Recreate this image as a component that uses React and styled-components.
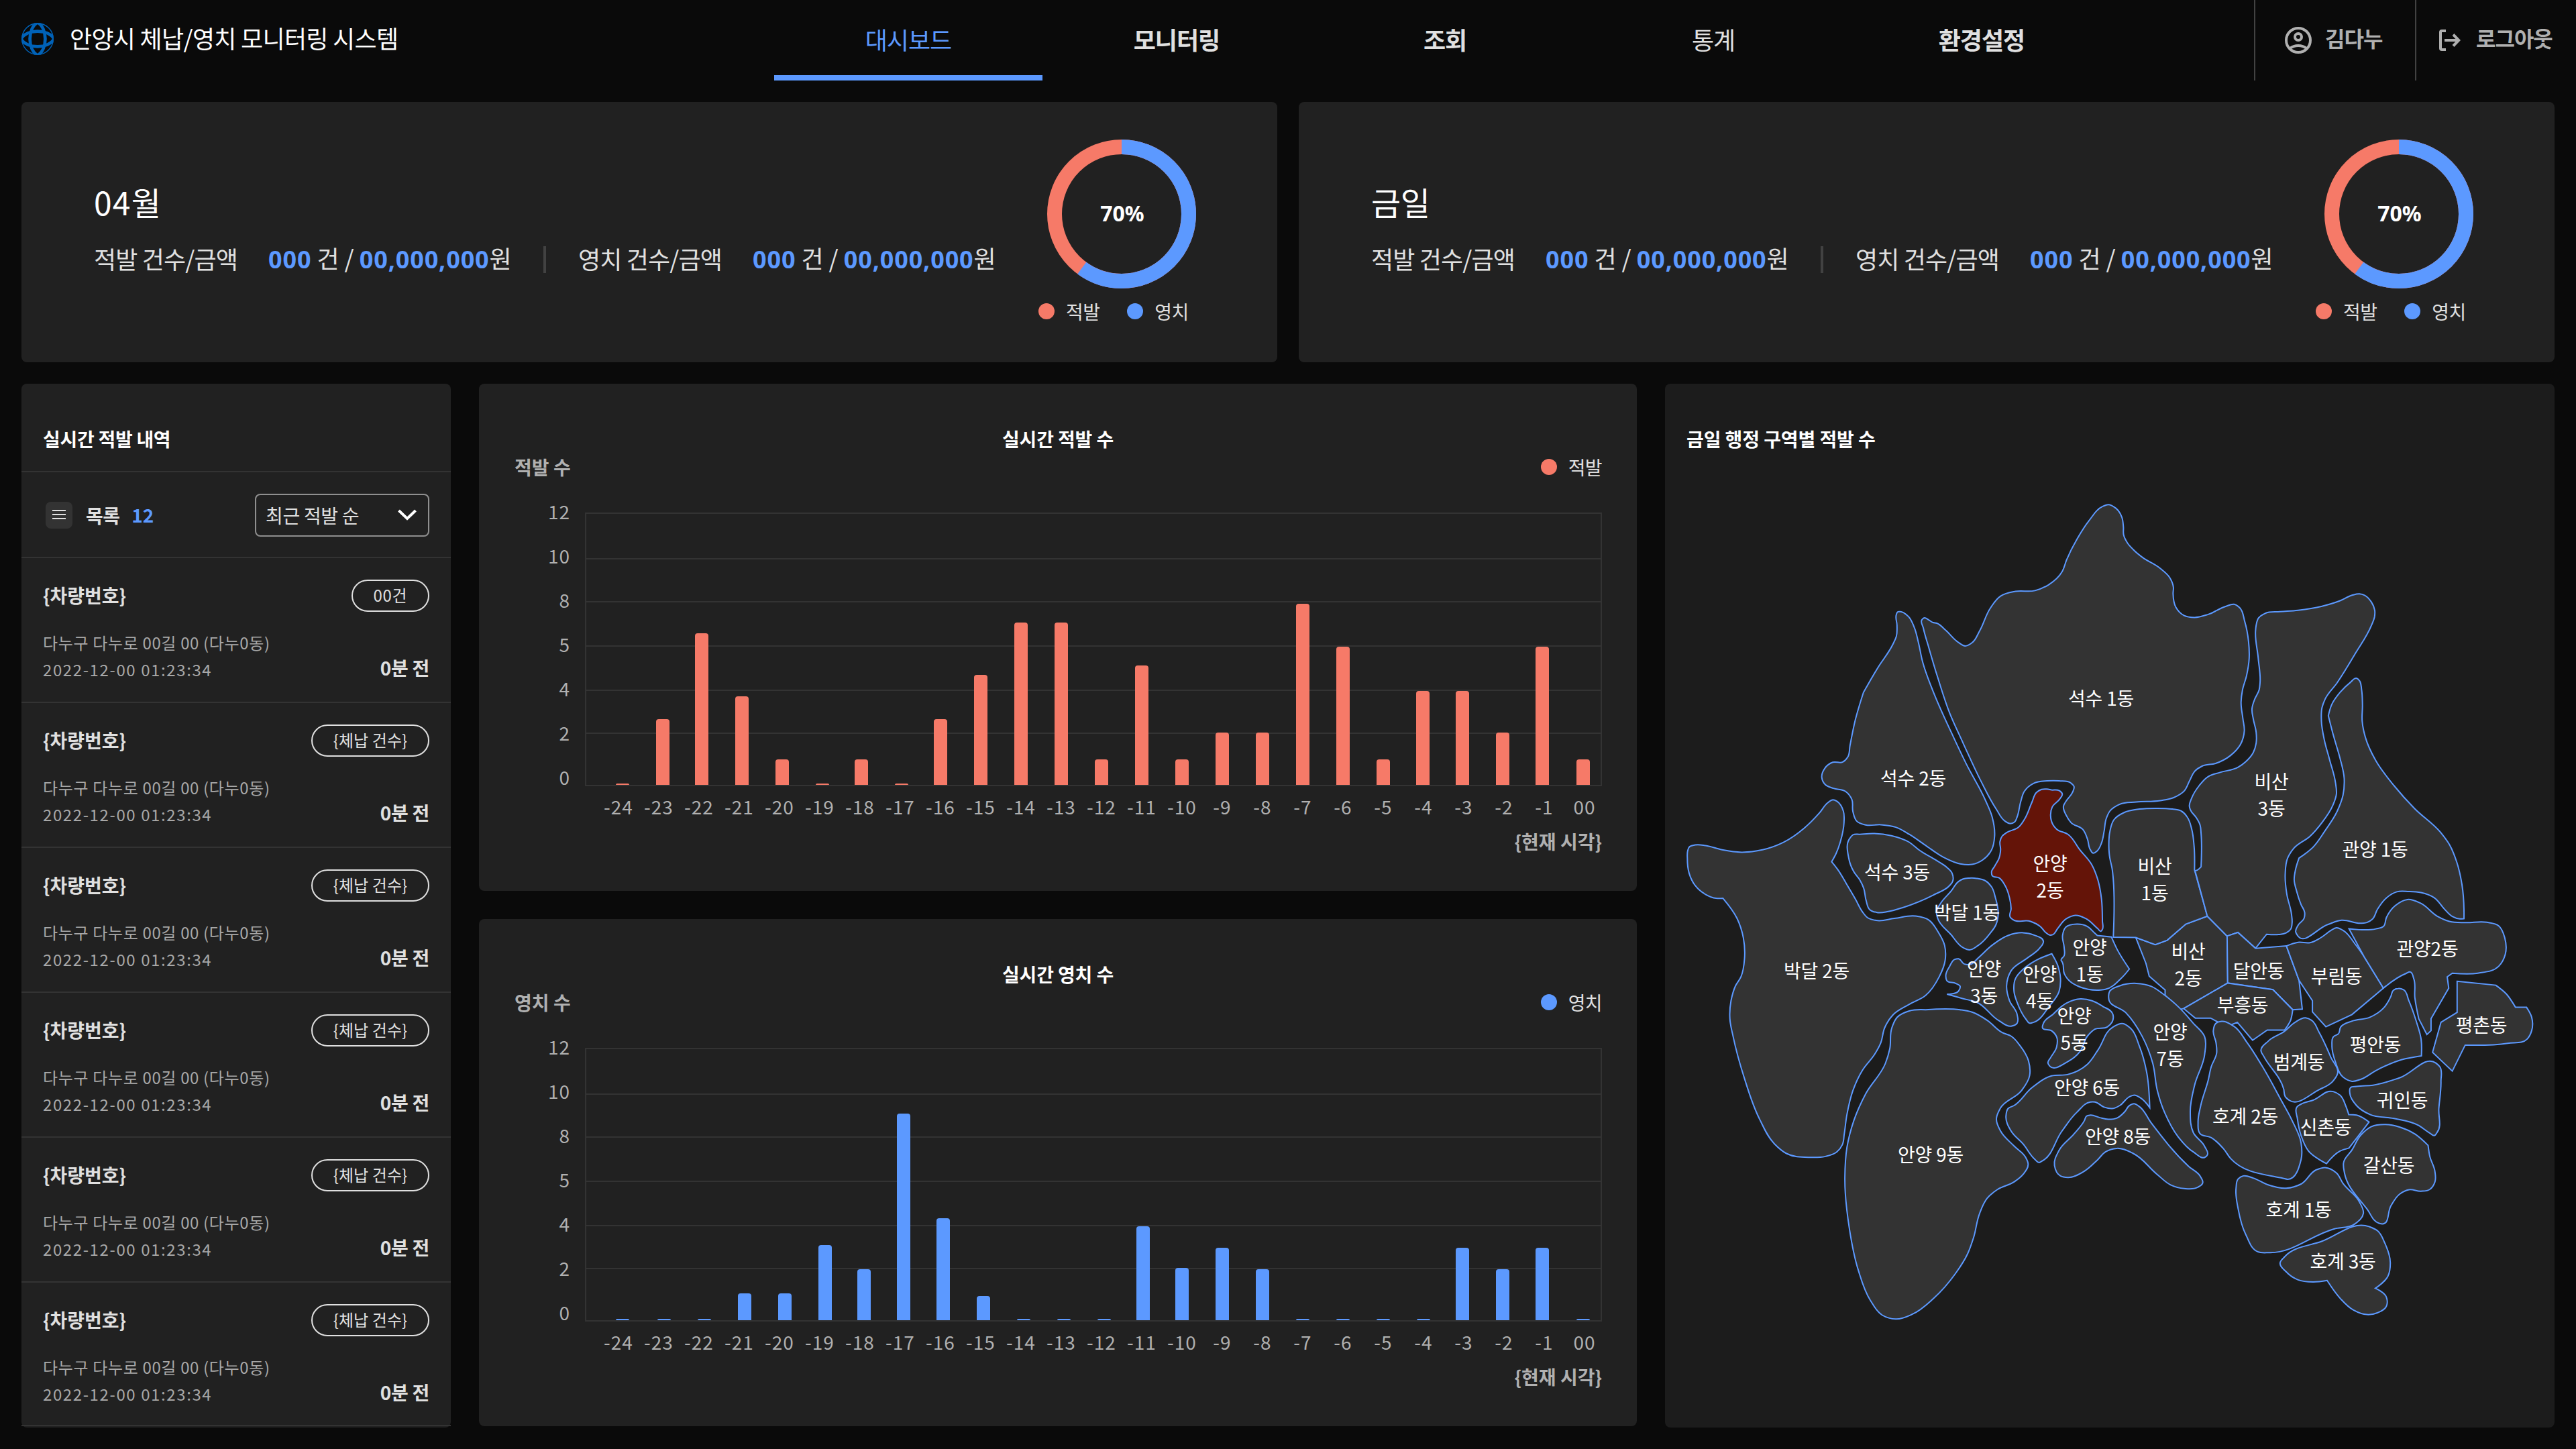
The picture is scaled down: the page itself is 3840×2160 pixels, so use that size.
import React from 'react';
import styled, { createGlobalStyle } from 'styled-components';

const BLUE = '#5c99ff';
const CORAL = '#f67a68';
const LINE = '#333333';
const MUTED = '#b0b0b0';

const GlobalStyle = createGlobalStyle`
  * { box-sizing: border-box; margin: 0; padding: 0; }
  html, body { background: #0a0a0a; }
  body {
    width: 3840px;
    height: 2160px;
    overflow: hidden;
    font-family: 'Noto Sans CJK KR', 'Noto Sans', sans-serif;
    font-size: 28px;
    line-height: 40px;
    color: #e0e0e0;
  }
`;

/* ---------- header ---------- */

const Header = styled.header`
  display: flex;
  height: 120px;
`;

const Brand = styled.div`
  display: flex;
  align-items: center;
  gap: 24px;
  width: 1154px;
  padding: 0 0 4px 32px;
`;

const BrandName = styled.h1`
  padding-bottom: 4px;
  color: #ffffff;
  font-size: 36px;
  font-weight: 400;
  letter-spacing: -0.7px;
  white-space: nowrap;
`;

const Nav = styled.nav`
  display: flex;
`;

const Tab = styled.a`
  display: flex;
  align-items: center;
  justify-content: center;
  width: 400px;
  padding-top: 3px;
  font-size: 36px;
  letter-spacing: -1px;
  font-weight: ${(p) => (p.$bold ? 700 : 400)};
  color: ${(p) => (p.$active ? BLUE : '#e0e0e0')};
  border-bottom: 8px solid ${(p) => (p.$active ? BLUE : 'transparent')};
`;

const Account = styled.div`
  display: flex;
  margin-left: auto;
`;

const AccountItem = styled.div`
  display: flex;
  align-items: center;
  gap: ${(p) => p.$gap}px;
  width: 240px;
  padding-left: ${(p) => p.$indent}px;
  border-left: 2px solid #424242;
  color: ${MUTED};
`;

const AccountText = styled.span`
  padding-bottom: 9px;
  font-size: 32px;
  font-weight: 700;
  letter-spacing: -1px;
  white-space: nowrap;
`;

/* ---------- page frame ---------- */

const Main = styled.main`
  display: flex;
  flex-direction: column;
  gap: 32px;
  padding: 32px 32px 0;
`;

const SummaryRow = styled.section`
  display: grid;
  grid-template-columns: 1fr 1fr;
  gap: 32px;
`;

const Board = styled.section`
  display: grid;
  grid-template-columns: 640px 1726px 1326px;
  gap: 42px;
`;

const Panel = styled.div`
  background: ${(p) => p.$bg || '#212121'};
  border-radius: 8px;
`;

/* ---------- summary cards ---------- */

const SummaryCard = styled(Panel)`
  display: flex;
  justify-content: space-between;
  height: 388px;
  padding: 55px 120px 0 108px;
`;

const SummaryBody = styled.div`
  padding-top: 57px;
`;

const SummaryTitle = styled.h2`
  margin-bottom: 23px;
  font-size: 48px;
  line-height: 72px;
  font-weight: 400;
  letter-spacing: ${(p) => p.$tracking}px;
  color: #ffffff;
`;

const Figures = styled.div`
  display: flex;
  align-items: center;
  height: 52px;
  font-size: 36px;
  line-height: 52px;
  white-space: nowrap;
`;

const FigureLabel = styled.span`
  width: 260px;
  letter-spacing: -0.85px;
`;

const FigureValue = styled.span`
  width: 362px;
`;

const Num = styled.b`
  font-family: 'Noto Sans', sans-serif;
  color: ${BLUE};
  letter-spacing: 0.85px;
`;

const Bar = styled.i`
  width: 4px;
  height: 40px;
  margin: 4px 48px 0;
  background: #424242;
`;

const DonutColumn = styled.div`
  display: flex;
  flex-direction: column;
  align-items: flex-end;
  gap: 13px;
  width: 236px;
`;

const DonutText = styled.text`
  font-family: 'Noto Sans', sans-serif;
  font-size: 32px;
  font-weight: 700;
  fill: #ffffff;
`;

const LegendRow = styled.div`
  display: flex;
  gap: 41px;
  align-self: flex-start;
`;

const LegendItem = styled.div`
  display: flex;
  align-items: center;
  gap: 17px;
  letter-spacing: -0.6px;
`;

const Dot = styled.i`
  width: 24px;
  height: 24px;
  border-radius: 50%;
  background: ${(p) => p.$color};
`;

/* ---------- list ---------- */

const ListPanel = styled(Panel)`
  height: 1556px;
`;

const PanelTitle = styled.h3`
  height: 132px;
  padding: 62px 32px 0;
  font-size: 28px;
  font-weight: 700;
  letter-spacing: ${(p) => p.$tracking}px;
  color: #ffffff;
  border-bottom: 2px solid ${(p) => (p.$plain ? 'transparent' : LINE)};
`;

const Toolbar = styled.div`
  display: flex;
  align-items: center;
  height: 128px;
  padding: 2px 32px 0 36px;
  border-bottom: 2px solid ${LINE};
`;

const MenuButton = styled.button`
  display: flex;
  flex-direction: column;
  align-items: center;
  justify-content: center;
  gap: 4px;
  width: 40px;
  height: 40px;
  padding-bottom: 2px;
  border: 0;
  border-radius: 8px;
  background: #333333;

  i {
    width: 20px;
    height: 2px;
    background: #e0e0e0;
  }
`;

const ListLabel = styled.b`
  margin-left: 20px;
  padding-bottom: 1px;
  letter-spacing: -0.6px;
`;

const Count = styled.b`
  margin-left: 18px;
  padding-bottom: 2px;
  color: ${BLUE};
`;

const Select = styled.div`
  display: flex;
  align-items: center;
  justify-content: space-between;
  width: 260px;
  height: 64px;
  margin-left: auto;
  padding: 0 17px 1px 14px;
  border: 2px solid #8f8f8f;
  border-radius: 8px;
  letter-spacing: -0.3px;
`;

const Row = styled.article`
  display: flex;
  flex-direction: column;
  gap: 28px;
  height: 216px;
  padding: 32px 32px 0;
  border-bottom: 2px solid ${LINE};

  &:last-child { height: 214px; }
`;

const RowLine = styled.div`
  display: flex;
  justify-content: space-between;
  align-items: ${(p) => (p.$end ? 'flex-end' : 'center')};
`;

const Plate = styled.b`
  padding-bottom: 2px;
`;

const Pill = styled.span`
  display: flex;
  align-items: center;
  justify-content: center;
  width: ${(p) => (p.$wide ? 176 : 116)}px;
  height: 48px;
  padding-bottom: 2px;
  border: 2px solid #e0e0e0;
  border-radius: 24px;
  font-size: 24px;
  letter-spacing: ${(p) => (p.$wide ? 0.1 : 0.7)}px;
`;

const Meta = styled.div`
  margin: -2px 0 2px;
  color: #a8a8a8;
  font-size: 24px;
  white-space: nowrap;

  p { letter-spacing: 0.65px; }
  p + p { letter-spacing: 1.6px; }
`;

const Ago = styled.b`
  padding-bottom: 5px;
  letter-spacing: -0.3px;
`;

/* ---------- bar charts ---------- */

const ChartStack = styled.div`
  display: flex;
  flex-direction: column;
  gap: 42px;
`;

const ChartPanel = styled(Panel)`
  height: 756px;
  padding: 62px 52px 0;
`;

const ChartTitle = styled.h3`
  font-size: 28px;
  font-weight: 700;
  letter-spacing: -0.15px;
  text-align: center;
  color: #ffffff;
`;

const ChartHead = styled.div`
  display: flex;
  justify-content: space-between;
  margin: 2px 0 13px;
`;

const AxisName = styled.b`
  padding-left: 1px;
  color: ${MUTED};
`;

const ChartBody = styled.div`
  display: flex;
  gap: 22px;
`;

const YAxis = styled.div`
  display: flex;
  flex-direction: column;
  width: 84px;
  line-height: 66px;
  text-align: right;
  color: ${MUTED};
  letter-spacing: 1px;
`;

const PlotColumn = styled.div`
  width: 1516px;
  padding-top: 35px;

  svg { display: block; }
`;

const XAxis = styled.div`
  display: grid;
  grid-template-columns: repeat(25, 60px);
  margin: 10px 0 12px;
  padding-left: 20px;
  text-align: center;
  color: ${MUTED};
  letter-spacing: 1px;
`;

const NowLabel = styled.div`
  text-align: right;
  font-weight: 700;
  color: ${MUTED};
`;

/* ---------- map ---------- */

const MapSvg = styled.svg`
  display: block;
  font-size: 28px;
  letter-spacing: -0.2px;
`;

/* ---------- data ---------- */

const X_LABELS = [...Array.from({ length: 24 }, (_, i) => String(i - 24)), '00'];
const Y_LABELS = [12, 10, 8, 5, 4, 2, 0];
const GRID_Y = [69, 133, 199, 265, 329];

const DETECTED = {
  x: [46, 106, 164, 224, 284, 344, 402, 462, 520, 580, 640, 700, 760, 820, 880, 940, 1000, 1060, 1120, 1180, 1239, 1298, 1358, 1417, 1478],
  h: [2, 98, 226, 132, 38, 2, 38, 2, 98, 164, 242, 242, 38, 178, 38, 78, 78, 270, 206, 38, 140, 140, 78, 206, 38],
};

const IMPOUNDED = {
  x: [46, 108, 168, 228, 288, 348, 406, 465, 524, 584, 644, 704, 764, 822, 880, 940, 1000, 1060, 1120, 1180, 1240, 1298, 1358, 1417, 1478],
  h: [2, 2, 2, 40, 40, 112, 76, 308, 152, 36, 2, 2, 2, 140, 78, 108, 76, 2, 2, 2, 2, 108, 76, 108, 2],
};

// Survey sheets: origin and scale of each sheet on the map canvas.
const SHEETS = {
  nw: [2480, 720, 2.24, 2.45],
  ne: [3140, 720, 2.24, 2.45],
  sw: [2480, 1340, 2.24, 2.24],
  se: [3140, 1340, 2.24, 2.24],
};

// sheet, outline ("!" marks a sharp corner), label centre, label lines, active
const DISTRICTS = [
  ['nw', '862,500 869,493 885,500 898,509 912,512 940,536 984,582 1007,595 1030,583 1055,540 1092,455 1125,413 1175,396 1240,393 1285,372 1331,323 1345,282 1380,205 1420,138 1467,85 1484,79 1510,92 1530,125 1535,160 1536,190 1548,218 1568,243 1598,271 1658,312 1690,346 1702,380 1701,405 1710,453 1738,484 1772,491 1818,480 1878,450 1905,443 1923,455 1940,505 1953,580 1955,640 1946,705 1933,755 1928,800 1934,860 1939,905 1926,955 1893,995 1843,1024 1798,1034 1773,1053 1756,1088 1738,1125 1703,1149 1658,1160 1578,1165 1523,1173 1490,1198 1478,1225 1471,1270 1462,1315 1448,1343 1434,1352 1425,1340 1415,1300 1400,1266 1360,1240 1345,1215 1335,1180 1345,1160 1365,1130 1370,1108 1360,1096 1320,1088 1280,1088 1235,1097 1205,1125 1192,1165 1180,1220 1172,1238 1157,1244 1140,1235 1110,1190 1060,1090 1000,950 955,840 915,710 885,600 867,530', 3132, 1042, ['석수 1동']],
  ['nw', '790,470 815,485 836,525 850,580 865,655 905,775 960,910 1010,1025 1075,1160 1097,1220 1105,1290 1095,1340 1065,1377 1030,1393 990,1391 940,1370 870,1320 820,1283 775,1257 725,1248 675,1249 645,1235 632,1200 628,1155 608,1127 567,1115 540,1102 528,1075 538,1042 565,1020 598,1019 615,1000 622,960 640,865 667,765! 715,675 765,590 777,560 779,520 777,480 781,471', 2852, 1161, ['석수 2동']],
  ['nw', '632,1285 655,1283 700,1280 760,1288 820,1312 855,1342 910,1378 945,1403 963,1425 965,1455 955,1470 900,1505 800,1550 750,1565 715,1569 688,1558 676,1525 668,1480 655,1450 635,1420 618,1370 620,1300', 2828, 1301, ['석수 3동']],
  ['nw', '1020,1443 1045,1444 1075,1453 1095,1475 1108,1515 1117,1575 1110,1612 1090,1645 1050,1689 1020,1705 1000,1697 960,1650 915,1590 911,1565 925,1535 960,1490 985,1455 1000,1446', 2932, 1361, ['박달 1동']],
  ['sw', '549,-322 565,-331 580,-325 600,-293 602,-255 590,-191 575,-150 561,-124! 580,-100 610,-51 640,0 665,45 680,62 710,72 770,65 840,57 885,70 915,108 938,155 940,205 920,260 875,322 820,352 765,388 738,430 725,480 705,518 665,570 632,640 612,720 603,785 597,820 578,845 540,860 490,863 410,850 370,818 320,735 270,600 232,460 221,400 225,340 240,290 258,260 270,200 266,130 245,65 198,-2! 175,-2 140,-15 105,-45 85,-86 79,-136 80,-159 85,-173 105,-180 140,-178 195,-164 260,-156 330,-164 400,-189 470,-237 520,-287', 2708, 1448, ['박달 2동']],
  ['sw', '875,370! 990,370 1030,378 1080,405 1130,446 1160,458 1190,490 1218,540 1222,590 1195,640 1125,698 1111,735 1125,775 1170,825 1208,862 1217,885 1200,920 1170,945 1115,970 1080,1000 1055,1050 1035,1130 1015,1185 975,1250 900,1335 830,1387 775,1403 730,1390 690,1340 650,1240 620,1100 605,930 612,830 635,740 675,650 740,550 755,500 762,430 780,395 820,374', 2878, 1722, ['안양 9동']],
  ['nw', '1280,1118 1295,1121 1320,1123 1331,1135 1322,1155 1298,1182 1292,1215 1300,1248 1312,1264 1350,1283 1390,1340 1430,1395 1450,1450 1462,1520 1465,1600 1465,1630 1460,1637 1450,1628 1410,1591 1375,1579 1345,1591 1315,1628 1300,1649 1290,1651 1275,1641 1258,1620 1225,1601 1165,1594 1157,1585 1160,1555 1155,1515 1140,1470 1120,1442 1097,1434 1095,1420 1105,1400 1120,1370 1125,1340 1123,1310 1130,1290 1145,1277 1185,1257 1205,1228 1230,1165 1245,1130 1262,1119', 3056, 1288, ['안양', '2동'], true],
  ['sw', '1200,113 1235,120 1268,143 1255,165 1215,197 1160,240 1145,290 1155,340 1180,385 1180,415 1160,425 1120,407 1045,345 1000,333 946,318! 985,307 990,292 975,282 945,272 942,257 955,225 972,202 985,200 1003,217 1025,218 1050,197 1100,152 1150,122', 2957.5, 1445, ['안양', '3동']],
  ['sw', '1296,183! 1315,220 1325,265 1320,310 1290,355 1232,413 1222,415 1210,402 1180,345 1170,310 1175,265 1200,235 1240,207 1285,187', 3040.5, 1453, ['안양', '4동']],
  ['sw', '1380,84 1415,92 1440,115 1448,122! 1495,127! 1515,170 1555,234! 1530,263 1475,302 1460,304 1390,294 1360,278 1338,250 1332,213 1327,204 1337,190 1337,160 1332,122 1342,95', 3115, 1413, ['안양', '1동']],
  ['sw', '1392,334 1430,340 1465,358 1500,385 1500,405 1482,427 1440,435 1415,458 1390,510 1350,543 1290,559 1283,548 1292,530 1312,495 1312,460 1295,440 1265,430 1268,415 1300,385 1345,348', 3092, 1515, ['안양', '5동']],
  ['sw', '1295,591 1350,586 1415,552 1450,505 1500,428 1532,416 1560,433 1588,490 1613,580 1623,697! 1593,665 1571,655 1553,662 1523,690 1498,700 1470,695 1440,678 1425,678 1380,712 1330,775 1262,876 1253,880 1240,870 1200,818 1160,775 1143,725 1150,700 1170,690 1230,630', 3111, 1622, ['안양 6동']],
  ['sw', '1425,722 1455,730 1485,736 1515,731 1540,710 1553,692 1573,684 1588,693 1628,748 1753,893 1793,928 1800,948 1783,963 1738,967 1693,955 1648,920 1568,850 1513,833 1475,845 1450,870 1400,912 1350,930 1325,925 1305,890 1320,840 1370,785 1405,740 1412,725', 3157, 1695, ['안양 8동']],
  ['se', '98,129! 163,153! 203,138! 265,84! 337,58! 403,124! 405,281! 258,366! 246,369! 196,322! 196,304! 143,258! 132,215!', 3262, 1419, ['비산', '2동']],
  ['se', '100,282 150,292 190,318 245,365 290,415 328,460 328,520 295,620 280,710 290,780 328,826 337,855 330,862 290,845 240,795 195,715 170,640 155,550 120,460 65,380 8,335 10,310 45,290', 3235, 1539, ['안양', '7동']],
  ['ne', '12,1270 25,1230 60,1203 110,1191 165,1188 220,1191 250,1198 270,1220 285,1265 293,1330 294,1413! 337,1582! 265,1611! 203,1670! 163,1686! 98,1660! 23,1659! 23,1450 20,1415 10,1360 8,1320', 3212, 1292.5, ['비산', '1동']],
  ['ne', '500,520 508,493 530,476 580,470 640,465 720,450 780,430 820,410 845,405 862,410 885,435 896,465 895,490 885,520 830,625 770,730 730,790 720,820 718,870 728,940 745,1010 765,1095 768,1135 757,1175 720,1240 680,1290 625,1335 605,1370 597,1430 602,1500 618,1575 620,1605 615,1630 600,1643 575,1649 535,1648! 498,1699! 439,1641! 403,1655! 337,1582! 296,1416! 303,1414 316,1402! 316,1280 313,1250 300,1222 280,1193 277,1180 285,1150 310,1105 340,1072 380,1057 440,1038 465,1018 490,985 500,950 500,910 490,860 486,825 495,790 510,755 513,730 507,640 498,540', 3386, 1166.5, ['비산', '3동']],
  ['ne', '835,713 845,722 852,755 855,810 854,870 865,930 900,1015 960,1105 1030,1190 1115,1275 1145,1320 1170,1385 1187,1465 1194,1560 1194,1591! 1180,1592 1155,1583 1130,1558 1095,1515 1050,1496 1010,1492 970,1493 935,1515 905,1557 888,1593 870,1605 850,1608 785,1597 740,1612 640,1655 632,1639 640,1615 660,1590 662,1568 650,1540 635,1490 627,1450 632,1410 643,1370! 690,1330 730,1270 770,1200 790,1140 794,1080 780,1005 760,930 741,850! 752,810 780,765 815,728', 3540.5, 1267, ['관양 1동']],
  ['se', '403,124! 439,112! 498,165! 601,157! 643,272! 654,368! 622,370! 556,303! 405,281!', 3367, 1448, ['달안동']],
  ['se', '601,157! 640,145 680,146 715,130 750,105 768,96 790,105 830,150 860,192! 925,298! 820,386! 733,427! 688,377! 688,340! 643,272!', 3483, 1456, ['부림동']],
  ['se', '810,100! 900,100 925,92 935,62 965,22 1005,2 1050,15 1105,58 1145,75 1200,79 1270,78 1310,90 1330,130 1332,185 1310,225 1240,248 1155,248! 1138,260! 1143,298! 1084,400! 1084,440! 1070,453! 1043,400! 1030,330 1026,265 1015,244 1000,249 925,298! 860,192!', 3618.5, 1415, ['관양2동']],
  ['se', '258,366! 405,281! 556,303! 622,370! 615,405 595,438! 537,438! 488,472! 437,412! 418,420! 372,411! 348,398! 297,398!', 3343, 1499, ['부흥동']],
  ['se', '385,409 425,425 470,480 520,558 585,675 620,740 650,815 650,870 605,936 590,933 415,867 390,833 350,797 312,783 306,745 315,690 340,605 350,560 368,515 366,480 357,440 365,416', 3347, 1665.5, ['호계 2동']],
  ['se', '665,397 685,405 710,445 750,530 772,583 755,610 710,637 610,672 597,660 592,635 525,525 516,507 540,475 595,442 630,412', 3427, 1584, ['범계동']],
  ['se', '975,299 992,303 1010,340 1035,410 1051,470 1052,524! 985,537 900,573 850,602 820,609 790,595 765,545 753,490 758,460 775,450 782,428 820,408 880,395 925,365 950,325 958,305', 3541, 1558, ['평안동']],
  ['se', '1171,275! 1300,288! 1335,317 1366,362! 1403,362! 1420,395 1420,440 1405,468 1340,482 1198,488! 1155,575! 1089,512! 1117,412! 1171,379!', 3699, 1529, ['평촌동']],
  ['se', '1100,548 1113,560 1117,610 1110,700 1104,780 1095,790 1080,782 1040,755 960,733 880,720 835,690 813,650 815,630 835,626 890,622 980,597', 3581, 1641, ['귀인동']],
  ['se', '757,643 780,655 800,693 809,720! 835,722 877,745! 810,832! 780,842 735,884! 675,842 650,790 638,735 636,695 650,685 690,672', 3467, 1681.5, ['신촌동']],
  ['se', '930,753 980,762 1030,785 1074,823! 1080,860 1097,910 1097,945 1080,970 1050,976 1010,971 980,985 950,1025 922,1085 910,1083 870,1035 795,915 792,880 820,838 850,788 885,760', 3561, 1738, ['갈산동']],
  ['se', '457,925 490,932 540,955 600,966 650,952 700,905 730,897 768,915 790,950 845,1012 858,1050 830,1085 760,1102 545,1181 505,1178 465,1120 440,1035 433,965 440,935', 3426.5, 1804.5, ['호계 1동']],
  ['se', '877,1094 905,1108 930,1150 948,1215 940,1260 898,1300! 935,1330 935,1360 905,1382 870,1388 825,1373 780,1333 737,1274! 690,1279 640,1272 600,1245 580,1215 595,1195 720,1143', 3492.5, 1881, ['호계 3동']],
];

// Closed outline through every point, rounded except at the marked corners.
function outline(sheet, data) {
  const [ox, oy, sx, sy] = SHEETS[sheet];
  const pts = data.split(' ').map((s) => {
    const sharp = s.endsWith('!');
    const [x, y] = s.replace('!', '').split(',').map(Number);
    return { x: ox + x / sx, y: oy + y / sy, sharp };
  });
  const n = pts.length;
  const dist = (a, b) => Math.hypot(a.x - b.x, a.y - b.y);
  const dir = pts.map((p, i) => {
    if (p.sharp) return { x: 0, y: 0 };
    const a = pts[(i + n - 1) % n];
    const b = pts[(i + 1) % n];
    const la = dist(p, a) || 1;
    const lb = dist(p, b) || 1;
    // chord directions weighted so that the nearer neighbour counts for more
    const vx = ((p.x - a.x) / la) * lb + ((b.x - p.x) / lb) * la;
    const vy = ((p.y - a.y) / la) * lb + ((b.y - p.y) / lb) * la;
    const l = Math.hypot(vx, vy) || 1;
    return { x: vx / l, y: vy / l };
  });
  const f = (v) => v.toFixed(1);
  let d = `M${f(pts[0].x)} ${f(pts[0].y)}`;
  for (let i = 0; i < n; i += 1) {
    const j = (i + 1) % n;
    const p = pts[i];
    const q = pts[j];
    const k = dist(p, q) * 0.35;
    d += `C${f(p.x + dir[i].x * k)} ${f(p.y + dir[i].y * k)} ${f(q.x - dir[j].x * k)} ${f(q.y - dir[j].y * k)} ${f(q.x)} ${f(q.y)}`;
  }
  return `${d}Z`;
}

/* ---------- drawings ---------- */

const Logo = () => (
  <svg width="48" height="48" viewBox="0 0 48 48" fill="none" stroke="#0062b8">
    <clipPath id="globe"><circle cx="24" cy="24" r="24" /></clipPath>
    <circle cx="24" cy="24" r="23.3" strokeWidth="1.4" />
    <g clipPath="url(#globe)" strokeWidth="4.8">
      <path d="M-1 24C9 8.800 39 8.800 49 24C39 39.200 9 39.200 -1 24Z" />
      <path d="M24 -1C8.800 9 8.800 39 24 49C39.200 39 39.200 9 24 -1Z" />
    </g>
  </svg>
);

const UserIcon = () => (
  <svg width="48" height="48" viewBox="0 0 24 24" fill="none" stroke="currentColor" strokeWidth="2">
    <circle cx="12" cy="12" r="9" />
    <circle cx="12" cy="9.500" r="2.500" />
    <path d="M5.600 18.200C7.400 16.800 9.600 16 12 16s4.600.8 6.400 2.200" />
  </svg>
);

const LogoutIcon = () => (
  <svg width="32" height="32" viewBox="0 0 32 32" fill="none" stroke="currentColor" strokeWidth="4">
    <path d="M10 2H4a2 2 0 0 0-2 2v24a2 2 0 0 0 2 2h6" />
    <path d="M8 16h20M21 7.500 29.200 16 21 24.500" />
  </svg>
);

const Chevron = () => (
  <svg width="28" height="18" viewBox="0 0 28 18" fill="none" stroke="#ffffff" strokeWidth="4">
    <path d="M1.500 2 14 14 26.500 2" />
  </svg>
);

const RING = 2 * Math.PI * 100;

const Donut = () => (
  <svg width="224" height="224" viewBox="0 0 224 224">
    <g fill="none" strokeWidth="22" transform="rotate(-90 112 112)">
      <circle cx="112" cy="112" r="100" stroke={CORAL} />
      <circle cx="112" cy="112" r="100" stroke={BLUE} strokeDasharray={`${RING * 0.6} ${RING}`} />
    </g>
    <DonutText x="113" y="123" textAnchor="middle">70%</DonutText>
  </svg>
);

/* ---------- sections ---------- */

const Legend = ({ color, children }) => (
  <LegendItem><Dot $color={color} />{children}</LegendItem>
);

const Figure = ({ label }) => (
  <>
    <FigureLabel>{label}</FigureLabel>
    <FigureValue><Num>000</Num> 건 / <Num>00,000,000</Num>원</FigureValue>
  </>
);

const Summary = ({ title, tracking }) => (
  <SummaryCard>
    <SummaryBody>
      <SummaryTitle $tracking={tracking}>{title}</SummaryTitle>
      <Figures>
        <Figure label="적발 건수/금액" />
        <Bar />
        <Figure label="영치 건수/금액" />
      </Figures>
    </SummaryBody>
    <DonutColumn>
      <Donut />
      <LegendRow>
        <Legend color={CORAL}>적발</Legend>
        <Legend color={BLUE}>영치</Legend>
      </LegendRow>
    </DonutColumn>
  </SummaryCard>
);

const Item = ({ first }) => (
  <Row>
    <RowLine>
      <Plate>{'{차량번호}'}</Plate>
      <Pill $wide={!first}>{first ? '00건' : '{체납 건수}'}</Pill>
    </RowLine>
    <RowLine $end>
      <Meta>
        <p>다누구 다누로 00길 00 (다누0동)</p>
        <p>2022-12-00 01:23:34</p>
      </Meta>
      <Ago>0분 전</Ago>
    </RowLine>
  </Row>
);

const BarChart = ({ title, axis, name, color, data }) => (
  <ChartPanel>
    <ChartTitle>{title}</ChartTitle>
    <ChartHead>
      <AxisName>{axis}</AxisName>
      <Legend color={color}>{name}</Legend>
    </ChartHead>
    <ChartBody>
      <YAxis>{Y_LABELS.map((v) => <span key={v}>{v}</span>)}</YAxis>
      <PlotColumn>
        <svg width="1516" height="408">
          <g fill="none" stroke={LINE} strokeWidth="2">
            <rect x="1" y="1" width="1514" height="406" />
            {GRID_Y.map((y) => <path key={y} d={`M0 ${y}H1516`} />)}
          </g>
          <g fill={color}>
            {data.h.map((h, i) => {
              const r = Math.min(4, h);
              const x = data.x[i];
              return <path key={x} d={`M${x} 406v${r - h}q0 ${-r} ${r} ${-r}h${20 - 2 * r}q${r} 0 ${r} ${r}v${h - r}Z`} />;
            })}
          </g>
        </svg>
        <XAxis>{X_LABELS.map((v) => <span key={v}>{v}</span>)}</XAxis>
        <NowLabel>{'{현재 시각}'}</NowLabel>
      </PlotColumn>
    </ChartBody>
  </ChartPanel>
);

const DistrictMap = () => (
  <MapSvg width="1326" height="1424" viewBox="2482 704 1326 1424">
    <g stroke={BLUE} strokeWidth="2">
      {DISTRICTS.map(([sheet, data, x, y, label, active]) => (
        <path key={label.join('')} d={outline(sheet, data)} fill={active ? '#641408' : '#333333'} />
      ))}
    </g>
    <g fill="#ffffff" textAnchor="middle">
      {DISTRICTS.map(([, , x, y, label]) => label.map((line, i) => (
        <text key={label.join('') + line} x={x} y={y + 9.5 + i * 40}>{line}</text>
      )))}
    </g>
  </MapSvg>
);

export default function App() {
  return (
    <>
      <GlobalStyle />
      <Header>
        <Brand><Logo /><BrandName>안양시 체납/영치 모니터링 시스템</BrandName></Brand>
        <Nav>
          <Tab $active>대시보드</Tab>
          <Tab $bold>모니터링</Tab>
          <Tab $bold>조회</Tab>
          <Tab>통계</Tab>
          <Tab $bold>환경설정</Tab>
        </Nav>
        <Account>
          <AccountItem $indent={40} $gap={16}><UserIcon /><AccountText>김다누</AccountText></AccountItem>
          <AccountItem $indent={34} $gap={23}><LogoutIcon /><AccountText>로그아웃</AccountText></AccountItem>
        </Account>
      </Header>
      <Main>
        <SummaryRow>
          <Summary title="04월" tracking={1.2} />
          <Summary title="금일" tracking={-0.4} />
        </SummaryRow>
        <Board>
          <ListPanel>
            <PanelTitle $tracking={-0.3}>실시간 적발 내역</PanelTitle>
            <Toolbar>
              <MenuButton><i /><i /><i /></MenuButton>
              <ListLabel>목록</ListLabel>
              <Count>12</Count>
              <Select>최근 적발 순<Chevron /></Select>
            </Toolbar>
            <div>
              {[0, 1, 2, 3, 4, 5].map((i) => <Item key={i} first={i === 0} />)}
            </div>
          </ListPanel>
          <ChartStack>
            <BarChart title="실시간 적발 수" axis="적발 수" name="적발" color={CORAL} data={DETECTED} />
            <BarChart title="실시간 영치 수" axis="영치 수" name="영치" color={BLUE} data={IMPOUNDED} />
          </ChartStack>
          <Panel $bg="#1c1c1c">
            <PanelTitle $plain $tracking={-0.1}>금일 행정 구역별 적발 수</PanelTitle>
            <DistrictMap />
          </Panel>
        </Board>
      </Main>
    </>
  );
}
